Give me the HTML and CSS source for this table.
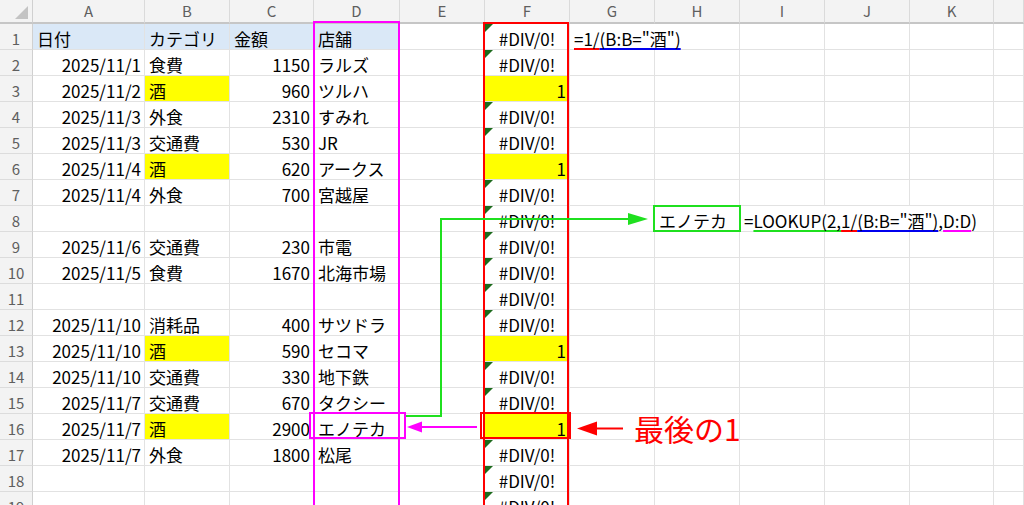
FILE: index.html
```html
<!DOCTYPE html>
<html lang="ja">
<head>
<meta charset="utf-8">
<title>Sheet</title>
<link rel="stylesheet" href="styles.css">
</head>
<body>
<div class="sheet">
  <div class="corner"><span class="tri"></span></div>
  <div class="h">A</div><div class="h">B</div><div class="h">C</div><div class="h">D</div><div class="h">E</div><div class="h">F</div><div class="h">G</div><div class="h">H</div><div class="h">I</div><div class="h">J</div><div class="h">K</div><div class="h"></div>

  <div class="rn">1</div>
  <div class="c blue">日付</div><div class="c blue">カテゴリ</div><div class="c blue">金額</div><div class="c blue">店舗</div><div class="c"></div>
  <div class="c err ctr">#DIV/0!</div>
  <div class="c ov"><span class="u u-red">=1/</span><span class="u u-blue">(B:B="酒")</span></div>
  <div class="c"></div><div class="c"></div><div class="c"></div><div class="c"></div><div class="c"></div>

  <div class="rn">2</div>
  <div class="c r">2025/11/1</div><div class="c">食費</div><div class="c r">1150</div><div class="c">ラルズ</div><div class="c"></div>
  <div class="c err ctr">#DIV/0!</div>
  <div class="c"></div><div class="c"></div><div class="c"></div><div class="c"></div><div class="c"></div><div class="c"></div>

  <div class="rn">3</div>
  <div class="c r">2025/11/2</div><div class="c yel">酒</div><div class="c r">960</div><div class="c">ツルハ</div><div class="c"></div>
  <div class="c yel r">1</div>
  <div class="c"></div><div class="c"></div><div class="c"></div><div class="c"></div><div class="c"></div><div class="c"></div>

  <div class="rn">4</div>
  <div class="c r">2025/11/3</div><div class="c">外食</div><div class="c r">2310</div><div class="c">すみれ</div><div class="c"></div>
  <div class="c err ctr">#DIV/0!</div>
  <div class="c"></div><div class="c"></div><div class="c"></div><div class="c"></div><div class="c"></div><div class="c"></div>

  <div class="rn">5</div>
  <div class="c r">2025/11/3</div><div class="c">交通費</div><div class="c r">530</div><div class="c">JR</div><div class="c"></div>
  <div class="c err ctr">#DIV/0!</div>
  <div class="c"></div><div class="c"></div><div class="c"></div><div class="c"></div><div class="c"></div><div class="c"></div>

  <div class="rn">6</div>
  <div class="c r">2025/11/4</div><div class="c yel">酒</div><div class="c r">620</div><div class="c">アークス</div><div class="c"></div>
  <div class="c yel r">1</div>
  <div class="c"></div><div class="c"></div><div class="c"></div><div class="c"></div><div class="c"></div><div class="c"></div>

  <div class="rn">7</div>
  <div class="c r">2025/11/4</div><div class="c">外食</div><div class="c r">700</div><div class="c">宮越屋</div><div class="c"></div>
  <div class="c err ctr">#DIV/0!</div>
  <div class="c"></div><div class="c"></div><div class="c"></div><div class="c"></div><div class="c"></div><div class="c"></div>

  <div class="rn">8</div>
  <div class="c"></div><div class="c"></div><div class="c"></div><div class="c"></div><div class="c"></div>
  <div class="c err ctr">#DIV/0!</div>
  <div class="c"></div>
  <div class="c">エノテカ</div>
  <div class="c ov">=<span class="u u-green">LOOKUP(2,</span><span class="u u-red">1/</span><span class="u u-blue">(B:B="酒")</span>,<span class="u u-mag">D:D</span>)</div>
  <div class="c nr"></div><div class="c"></div><div class="c"></div>

  <div class="rn">9</div>
  <div class="c r">2025/11/6</div><div class="c">交通費</div><div class="c r">230</div><div class="c">市電</div><div class="c"></div>
  <div class="c err ctr">#DIV/0!</div>
  <div class="c"></div><div class="c"></div><div class="c"></div><div class="c"></div><div class="c"></div><div class="c"></div>

  <div class="rn">10</div>
  <div class="c r">2025/11/5</div><div class="c">食費</div><div class="c r">1670</div><div class="c">北海市場</div><div class="c"></div>
  <div class="c err ctr">#DIV/0!</div>
  <div class="c"></div><div class="c"></div><div class="c"></div><div class="c"></div><div class="c"></div><div class="c"></div>

  <div class="rn">11</div>
  <div class="c"></div><div class="c"></div><div class="c"></div><div class="c"></div><div class="c"></div>
  <div class="c err ctr">#DIV/0!</div>
  <div class="c"></div><div class="c"></div><div class="c"></div><div class="c"></div><div class="c"></div><div class="c"></div>

  <div class="rn">12</div>
  <div class="c r">2025/11/10</div><div class="c">消耗品</div><div class="c r">400</div><div class="c">サツドラ</div><div class="c"></div>
  <div class="c err ctr">#DIV/0!</div>
  <div class="c"></div><div class="c"></div><div class="c"></div><div class="c"></div><div class="c"></div><div class="c"></div>

  <div class="rn">13</div>
  <div class="c r">2025/11/10</div><div class="c yel">酒</div><div class="c r">590</div><div class="c">セコマ</div><div class="c"></div>
  <div class="c yel r">1</div>
  <div class="c"></div><div class="c"></div><div class="c"></div><div class="c"></div><div class="c"></div><div class="c"></div>

  <div class="rn">14</div>
  <div class="c r">2025/11/10</div><div class="c">交通費</div><div class="c r">330</div><div class="c">地下鉄</div><div class="c"></div>
  <div class="c err ctr">#DIV/0!</div>
  <div class="c"></div><div class="c"></div><div class="c"></div><div class="c"></div><div class="c"></div><div class="c"></div>

  <div class="rn">15</div>
  <div class="c r">2025/11/7</div><div class="c">交通費</div><div class="c r">670</div><div class="c">タクシー</div><div class="c"></div>
  <div class="c err ctr">#DIV/0!</div>
  <div class="c"></div><div class="c"></div><div class="c"></div><div class="c"></div><div class="c"></div><div class="c"></div>

  <div class="rn">16</div>
  <div class="c r">2025/11/7</div><div class="c yel">酒</div><div class="c r">2900</div><div class="c">エノテカ</div><div class="c"></div>
  <div class="c yel r">1</div>
  <div class="c"></div><div class="c"></div><div class="c"></div><div class="c"></div><div class="c"></div><div class="c"></div>

  <div class="rn">17</div>
  <div class="c r">2025/11/7</div><div class="c">外食</div><div class="c r">1800</div><div class="c">松尾</div><div class="c"></div>
  <div class="c err ctr">#DIV/0!</div>
  <div class="c"></div><div class="c"></div><div class="c"></div><div class="c"></div><div class="c"></div><div class="c"></div>

  <div class="rn">18</div>
  <div class="c"></div><div class="c"></div><div class="c"></div><div class="c"></div><div class="c"></div>
  <div class="c err ctr">#DIV/0!</div>
  <div class="c"></div><div class="c"></div><div class="c"></div><div class="c"></div><div class="c"></div><div class="c"></div>

  <div class="rn">19</div>
  <div class="c"></div><div class="c"></div><div class="c"></div><div class="c"></div><div class="c"></div>
  <div class="c err ctr">#DIV/0!</div>
  <div class="c"></div><div class="c"></div><div class="c"></div><div class="c"></div><div class="c"></div><div class="c"></div>
</div>

<svg class="marks" width="1024" height="505" viewBox="0 0 1024 505" aria-hidden="true">
  <rect x="314" y="22" width="85" height="500" fill="none" stroke="#ff00ff" stroke-width="2"/>
  <rect x="484" y="23" width="84" height="500" fill="none" stroke="#ff0000" stroke-width="2"/>
  <rect x="481" y="413" width="89" height="25" fill="none" stroke="#ff0000" stroke-width="2"/>
  <rect x="310" y="413" width="95" height="25" fill="none" stroke="#ff00ff" stroke-width="2"/>
  <line x1="477" y1="427" x2="420" y2="427" stroke="#ff00ff" stroke-width="2"/>
  <polygon points="407,427 422,421.5 422,432.5" fill="#ff00ff"/>
  <rect x="654" y="206" width="86" height="25" fill="none" stroke="#1fe01f" stroke-width="2"/>
  <polyline points="406,416 441,416 441,219 630,219" fill="none" stroke="#1fe01f" stroke-width="2"/>
  <polygon points="648,219 628,213 628,225" fill="#1fe01f"/>
  <line x1="623" y1="428.5" x2="595" y2="428.5" stroke="#ff0000" stroke-width="2"/>
  <polygon points="577,428.5 597,421.5 597,435.5" fill="#ff0000"/>
</svg>
<div class="note">最後の1</div>
</body>
</html>
```
FILE: styles.css
```css
html, body {
  margin: 0;
  height: 505px;
  overflow: hidden;
  background: #fff;
}
body {
  position: relative;
  font-family: "Noto Sans CJK JP", "Noto Sans", sans-serif;
  font-size: 17px;
  color: #000;
}
.sheet {
  display: grid;
  grid-template-columns: 33px 112px 85px 84px 86px 85px 85px 85px 85px 85px 85px 84px 30px;
  grid-template-rows: 24px;
  grid-auto-rows: 26px;
}
.corner {
  background: #f3f3f3;
  border-right: 1px solid #d0d0d0;
  border-bottom: 2px solid #c6c6c6;
  box-sizing: border-box;
  display: flex;
  align-items: flex-end;
  justify-content: flex-end;
  padding: 0 4px 3px 0;
}
.tri {
  width: 0;
  height: 0;
  border-left: 13px solid transparent;
  border-bottom: 13px solid #c3c3c3;
}
.h {
  background: #f3f3f3;
  color: #5f5f5f;
  font-size: 15px;
  line-height: 22px;
  text-align: center;
  border-right: 1px solid #dadada;
  border-bottom: 2px solid #c6c6c6;
  box-sizing: border-box;
}
.rn {
  background: #f3f3f3;
  color: #5f5f5f;
  font-size: 15px;
  line-height: 20px;
  padding-top: 5px;
  text-align: center;
  border-right: 1px solid #d0d0d0;
  border-bottom: 1px solid #dcdcdc;
  box-sizing: border-box;
}
.c {
  position: relative;
  box-sizing: border-box;
  padding: 5px 3px 0 4px;
  line-height: 20px;
  white-space: nowrap;
  border-right: 1px solid #e2e2e2;
  border-bottom: 1px solid #e2e2e2;
  min-width: 0;
}
.r { text-align: right; }
.ctr { text-align: center; padding-left: 3px; }
.blue { background: #dae8f7; }
.yel { background: #ffff00; }
.nr { border-right-color: transparent; }
.ov {
  z-index: 1;
  border-right-color: transparent;
  overflow: visible;
}
.err::before {
  content: "";
  position: absolute;
  top: 0;
  left: 0;
  width: 0;
  height: 0;
  border-top: 8px solid #1d6b1d;
  border-right: 8px solid transparent;
}
.u {
  text-decoration: underline;
  text-decoration-thickness: 2px;
  text-underline-offset: 2px;
  text-decoration-skip-ink: none;
}
.u-red { text-decoration-color: #ff0000; }
.u-blue { text-decoration-color: #0000ee; }
.u-green { text-decoration-color: #1fe01f; }
.u-mag { text-decoration-color: #ff00ff; }
.marks {
  position: absolute;
  top: 0;
  left: 0;
  z-index: 5;
  pointer-events: none;
}
.note {
  position: absolute;
  left: 634px;
  top: 410px;
  z-index: 6;
  font-size: 30px;
  line-height: 36px;
  color: #ff0000;
  white-space: nowrap;
}
```
